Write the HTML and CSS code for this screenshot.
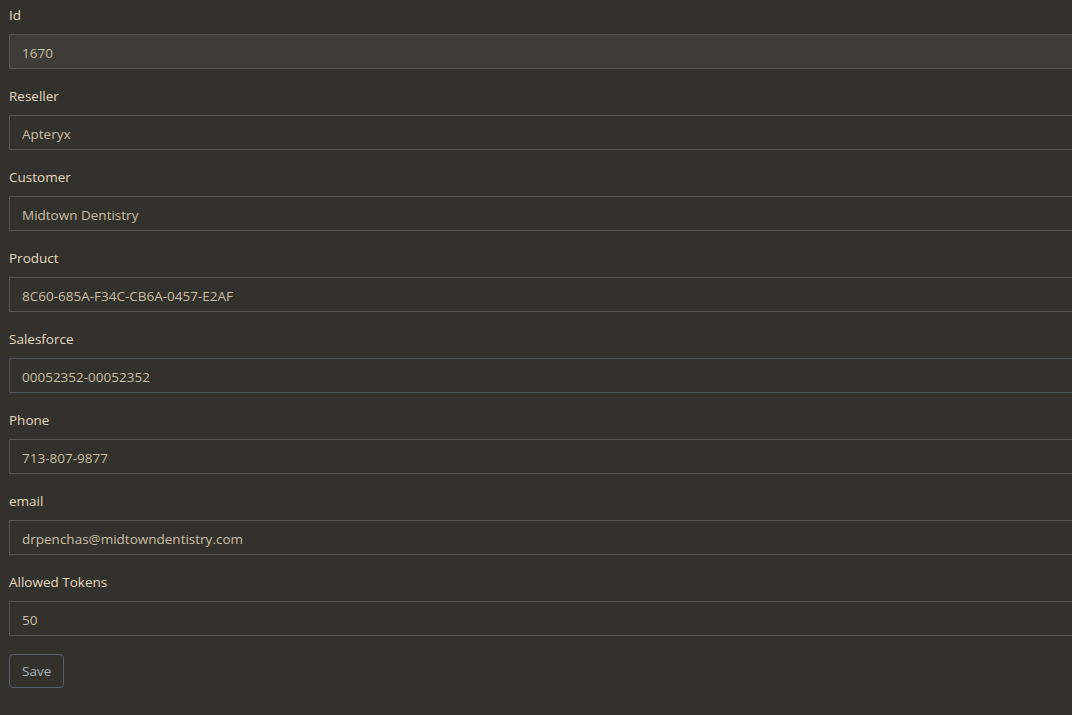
FILE: index.html
```html
<!DOCTYPE html>
<html lang="en">
<head>
    <meta charset="UTF-8">
    <meta name="viewport" content="width=device-width, initial-scale=1.0">
    <title>Edit License</title>
    <link rel="stylesheet" href="styles.css">
</head>
<body>
    <form class="edit-form">
        <div class="form-group">
            <label for="id">Id</label>
            <input class="form-control" id="id" type="text" value="1670" disabled>
        </div>
        <div class="form-group">
            <label for="reseller">Reseller</label>
            <input class="form-control" id="reseller" type="text" value="Apteryx">
        </div>
        <div class="form-group">
            <label for="customer">Customer</label>
            <input class="form-control" id="customer" type="text" value="Midtown Dentistry">
        </div>
        <div class="form-group">
            <label for="product">Product</label>
            <input class="form-control" id="product" type="text" value="8C60-685A-F34C-CB6A-0457-E2AF">
        </div>
        <div class="form-group">
            <label for="salesforce">Salesforce</label>
            <input class="form-control focused" id="salesforce" type="text" value="00052352-00052352">
        </div>
        <div class="form-group">
            <label for="phone">Phone</label>
            <input class="form-control" id="phone" type="text" value="713-807-9877">
        </div>
        <div class="form-group">
            <label for="email">email</label>
            <input class="form-control" id="email" type="text" value="drpenchas@midtowndentistry.com">
        </div>
        <div class="form-group">
            <label for="tokens">Allowed Tokens</label>
            <input class="form-control" id="tokens" type="text" value="50">
        </div>
        <button class="save-button" type="button">Save</button>
    </form>
</body>
</html>
```

FILE: styles.css
```css
html, body {
    margin: 0;
    background-color: #33312c;
}
body {
    font-family: "Open Sans", "Noto Sans", sans-serif;
    font-size: 13.5px;
    line-height: 21px;
    color: #e3d9c3;
    padding: 5px 0 0 9px;
    overflow: hidden;
}
.edit-form {
    width: 1100px;
}
.form-group {
    margin-bottom: 17px;
}
.form-group label {
    display: block;
    margin-bottom: 8px;
}
.form-control {
    display: block;
    box-sizing: border-box;
    width: 100%;
    height: 35px;
    padding: 7px 12px 5px;
    font: inherit;
    color: #c9bea7;
    background-color: #33312c;
    border: 1px solid #57554f;
    border-radius: 0;
    outline: none;
}
.form-control:disabled {
    background-color: #3e3c36;
    color: #c9bea7;
}
.form-control.focused {
    border-color: #4b525a;
}
.save-button {
    font: inherit;
    color: #a9b3bd;
    background-color: transparent;
    border: 1px solid #56616d;
    border-radius: 4px;
    padding: 6px 12px;
    height: 34px;
    margin-top: 1px;
}
```
